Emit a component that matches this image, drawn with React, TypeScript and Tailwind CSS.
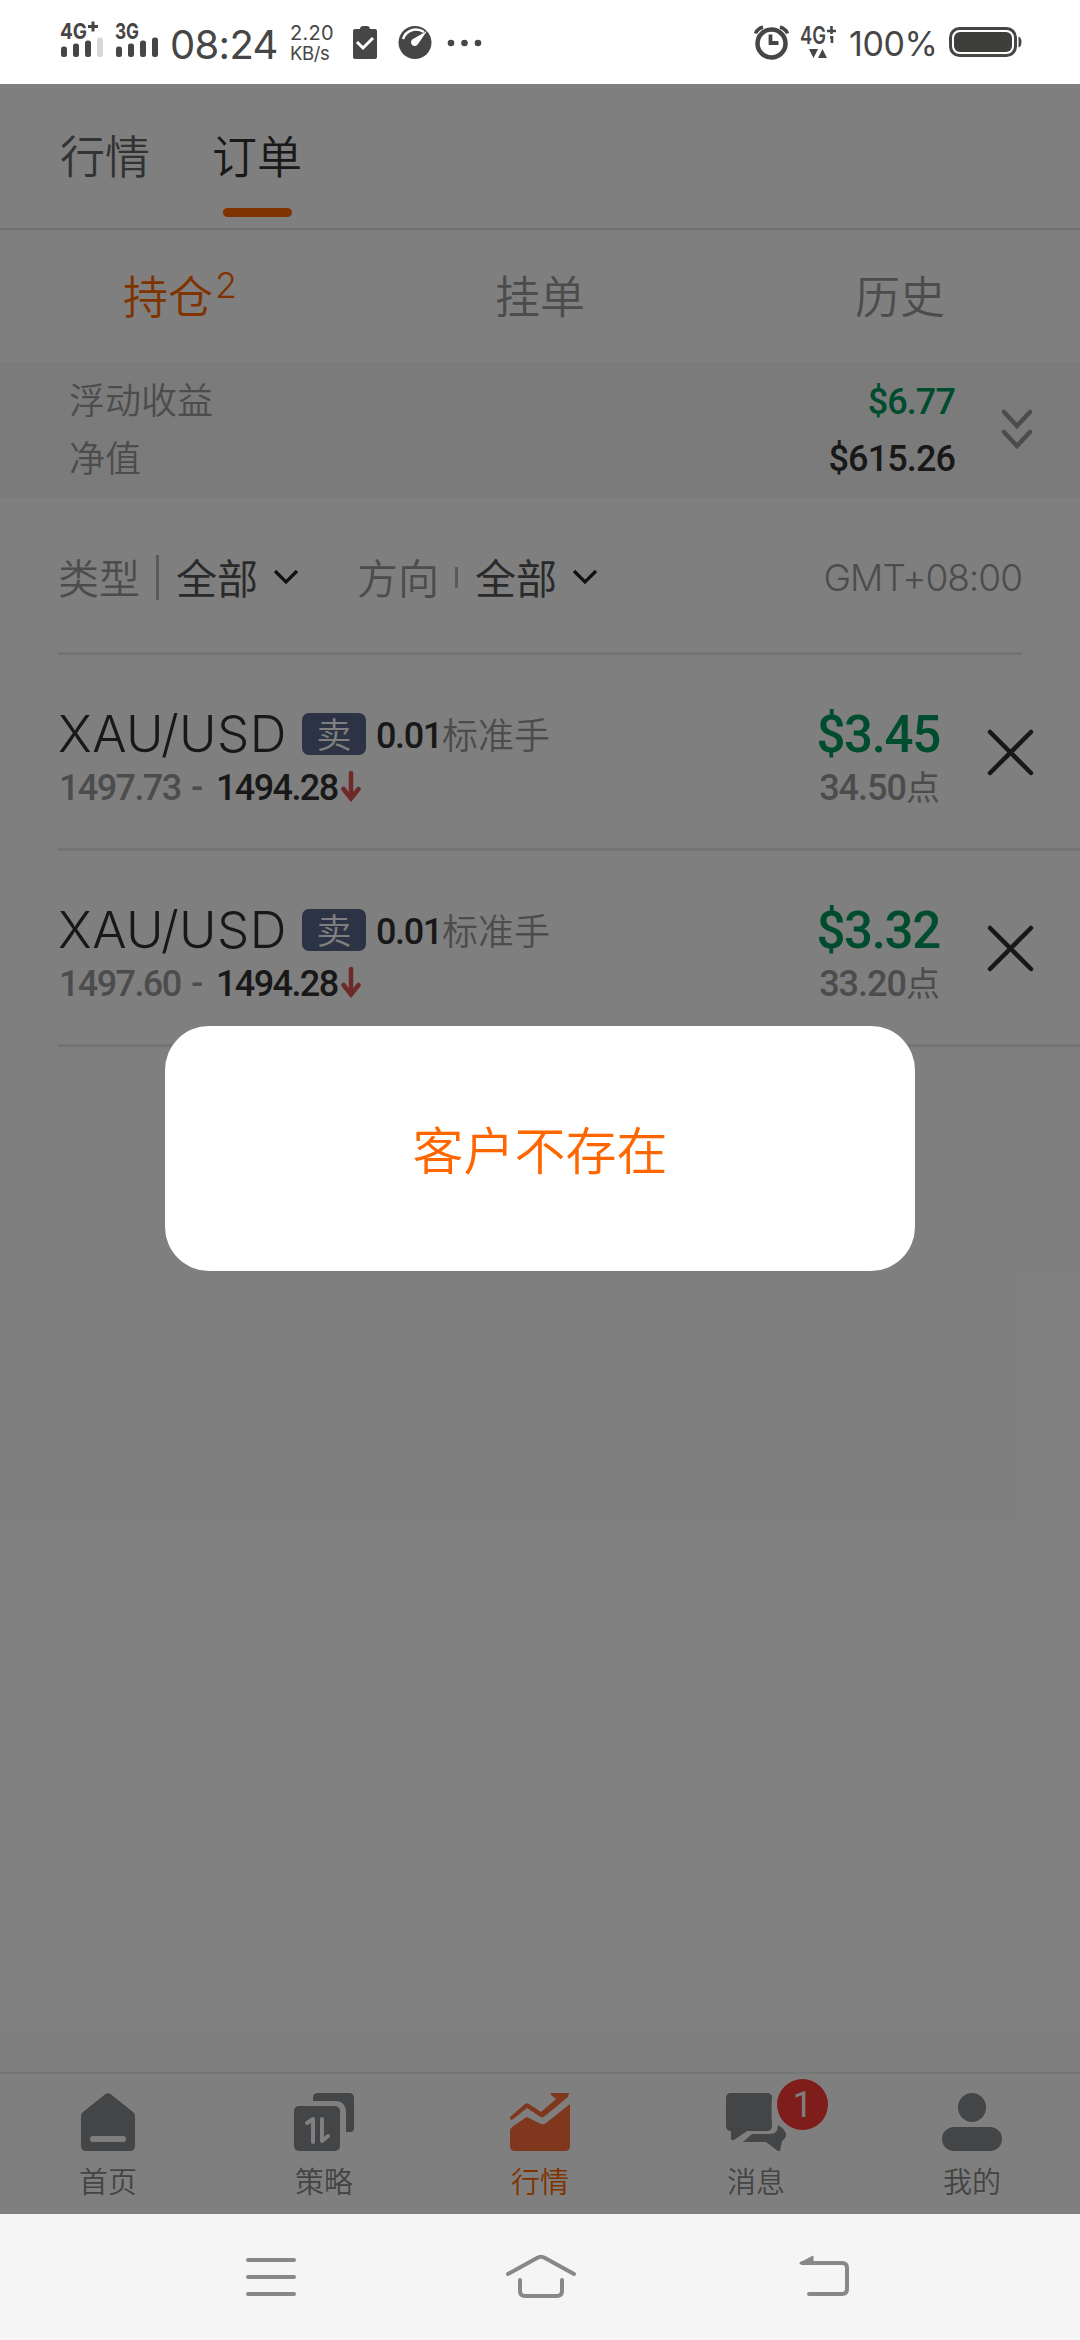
import { ReactNode } from 'react';
import clsx from 'clsx';

interface Order {
  id: number;
  symbol: string;
  lots: string;
  openPrice: string;
  currentPrice: string;
  profit: string;
  points: string;
}

const orders: Order[] = [
  { id: 1, symbol: 'XAU/USD', lots: '0.01', openPrice: '1497.73', currentPrice: '1494.28', profit: '$3.45', points: '34.50' },
  { id: 2, symbol: 'XAU/USD', lots: '0.01', openPrice: '1497.60', currentPrice: '1494.28', profit: '$3.32', points: '33.20' },
];

function Signal({ label, plus, level }: { label: string; plus?: boolean; level: number }) {
  return (
    <svg width="46" height="48" viewBox="0 -8 46 48" fill="#464646">
      <text x="0" y="18" fontSize="22" fontWeight="700" textLength={plus ? 27 : 24} lengthAdjust="spacingAndGlyphs">{label}</text>
      {plus && <path d="M28 5.500h10M33 .500v10" stroke="#464646" strokeWidth="3" />}
      {[0, 1, 2, 3].map((i) => (
        <rect key={i} x={1 + i * 12} y={25.5 - i * 3} width="6" height={10.5 + i * 3} rx="2.500" fill={i < level ? '#464646' : '#d8d8d8'} />
      ))}
    </svg>
  );
}

function StatusBar() {
  return (
    <div className="flex h-[84px] items-start bg-white pl-[60px] pr-[58px] font-['Inter',sans-serif] text-[#464646]">
      <div className="mt-[13px] flex w-[110px] gap-[9px]">
        <Signal label="4G" plus level={3} />
        <Signal label="3G" level={4} />
      </div>
      <span className="mt-[25px] w-[120px] text-[40px] leading-[40px] tracking-[-0.7px]">08:24</span>
      <div className="mt-[22px] flex w-[63px] flex-col whitespace-nowrap text-[20px]">
        <span className="leading-[23px] tracking-[0.3px]">2.20</span>
        <span className="text-[18.5px] leading-[17px] tracking-[-0.4px]">KB/s</span>
      </div>
      <svg className="mt-[25px]" width="24" height="35" viewBox="0 0 24 35">
        <path d="M2 4h5c0-2 1.500-3 3-3h4c1.500 0 3 1 3 3h5q2 0 2 2v26q0 2-2 2H2q-2 0-2-2V6q0-2 2-2z" fill="#464646" />
        <path d="M4 17l6 6L20 13" fill="none" stroke="#fff" strokeWidth="3" />
      </svg>
      <svg className="ml-[21px] mt-[25px]" width="34" height="35" viewBox="0 0 34 35">
        <circle cx="17" cy="17.500" r="16.500" fill="#464646" />
        <path d="M5 14C8 5 18 2 26 7" fill="none" stroke="#fff" strokeWidth="2.500" />
        <path d="M29 6L20 19a3.700 3.700 0 1 1-5-5z" fill="#fff" />
      </svg>
      <svg className="ml-[15px] mt-[39px]" width="36" height="8" viewBox="0 0 36 8" fill="#464646">
        <circle cx="4" cy="4" r="3.300" />
        <circle cx="17.500" cy="4" r="3.300" />
        <circle cx="31" cy="4" r="3.300" />
      </svg>
      <div className="ml-auto flex items-start">
        <svg className="mt-[25px]" width="35" height="35" viewBox="0 0 35 35" fill="none" stroke="#464646">
          <circle cx="17.500" cy="18.500" r="14" strokeWidth="4.500" />
          <path d="M16.500 9.500v8.500h8" strokeWidth="3.800" />
          <path d="M1.500 8.500Q3 4 9 2M33.500 8.500Q32 4 26 2" strokeWidth="3.500" />
        </svg>
        <svg className="ml-[10px] mt-[15px]" width="40" height="45" viewBox="0 -10 40 45" fill="#464646">
          <text x="1" y="18.500" fontSize="24" fontWeight="600" textLength="26" lengthAdjust="spacingAndGlyphs">4G</text>
          <path d="M28 6h9M32.500 1v8M33 11v7M31 12.500h2" stroke="#464646" strokeWidth="2.600" />
          <path d="M10 24h9l-4.500 9zM19 33h9l-4.500-9z" />
        </svg>
        <span className="ml-[10px] mt-[25px] w-[100px] text-[34px] leading-[38px] tracking-[-0.4px]">100%</span>
        <svg className="mt-[26px]" width="73" height="32" viewBox="0 0 73 32">
          <rect x="1.500" y="2.500" width="65" height="27" rx="9" fill="none" stroke="#464646" strokeWidth="3" />
          <rect x="5" y="6" width="58" height="20" rx="6" fill="#3e3f3b" />
          <path d="M69.500 10.500q3 1 3 5.500t-3 5.500z" fill="#464646" />
        </svg>
      </div>
    </div>
  );
}

function Summary() {
  return (
    <div className="flex h-[136px] items-center bg-[#f6f6f6] pl-[69px] pr-[47px]">
      <div className="flex flex-col pb-[6px] text-[36px] font-[350] leading-[58px] text-[#999]">
        <span>浮动收益</span>
        <span>净值</span>
      </div>
      <div className="ml-auto flex flex-col pt-px text-right font-['Roboto',sans-serif] text-[36px] font-medium leading-[57px] tracking-[-0.9px]">
        <span className="text-[#00995c]">$6.77</span>
        <span className="text-[#303030]">$615.26</span>
      </div>
      <svg className="ml-[46px]" width="32" height="42" viewBox="0 0 32 42" fill="none" stroke="#999" strokeWidth="4.500" strokeLinecap="round">
        <path d="M3 3l13 14L29 3M3 23l13 14 13-14" />
      </svg>
    </div>
  );
}

function Filter({ label, divider }: { label: string; divider: string }) {
  return (
    <div className="flex items-center">
      <span className="-mt-[2px] font-[350] text-[#999]">{label}</span>
      <span className={clsx('ml-[16px] mr-[17px] w-[3px] bg-[#b4b4b4]', divider)} />
      <span className="-mt-[2px] font-normal text-[#555]">全部</span>
      <svg className="ml-[15px]" width="26" height="17" viewBox="0 0 26 17" fill="none" stroke="#222" strokeWidth="3.200">
        <path d="M2 2l11 11L24 2" />
      </svg>
    </div>
  );
}

function OrderRow({ order }: { order: Order }) {
  return (
    <div className="ml-[58px] flex h-[196px] border-b-[3px] border-[#e6e6e6] pr-[45px]">
      <div className="pt-[51px]">
        <div className="flex h-[56px] items-center">
          <span className="w-[244px] whitespace-nowrap font-['Inter',sans-serif] text-[51px] font-light leading-[56px] tracking-[0.4px] text-[#303030]">{order.symbol}</span>
          <span className="flex h-[42px] w-[64px] items-center justify-center rounded-[7px] bg-[#576788] pb-[3px] text-[35px] font-[350] leading-[39px] text-white">卖</span>
          <span className="ml-[10px] w-[66px] pt-[3px] font-['Roboto',sans-serif] text-[36px] font-medium leading-[42px] tracking-[-1.4px] text-[#303030]">{order.lots}</span>
          <span className="-mt-[3px] text-[36px] font-[350] leading-[42px] text-[#999]">标准手</span>
        </div>
        <div className="mt-[2px] flex h-[48px] items-center whitespace-pre pl-px font-['Roboto',sans-serif] text-[36px] font-medium leading-[48px] tracking-[-1.6px]">
          <span className="w-[132px] text-[#999]">{order.openPrice}</span>
          <span className="w-[25px] text-[#999]">-</span>
          <span className="text-[#303030]">{order.currentPrice}</span>
          <svg className="-mt-[4px] ml-[3px]" width="20" height="32" viewBox="0 0 20 32" fill="none" stroke="#dc5252" strokeWidth="4.500" strokeLinecap="round">
            <path d="M10 3v25M2.500 19L10 28.500 17.500 19" />
          </svg>
        </div>
      </div>
      <div className="ml-auto flex flex-col items-end pt-[51px]">
        <span className="font-['Roboto',sans-serif] text-[51px] font-medium leading-[58px] tracking-[-1.3px] text-[#00995c]">{order.profit}</span>
        <div className="flex h-[48px] items-center text-[#999]">
          <span className="font-['Roboto',sans-serif] text-[36px] font-medium leading-[48px] tracking-[-1px]">{order.points}</span>
          <span className="-mt-[4px] text-[34px] font-normal leading-[44px]">点</span>
        </div>
      </div>
      <svg className="ml-[46px] mt-[73px]" width="49" height="49" viewBox="0 0 49 49" fill="none" stroke="#303030" strokeWidth="4.500" strokeLinecap="round">
        <path d="M4 4l41 41M45 4L4 45" />
      </svg>
    </div>
  );
}

function TabItem({ label, active, badge, children }: { label: string; active?: boolean; badge?: string; children: ReactNode }) {
  return (
    <div className={clsx('relative flex flex-1 flex-col items-center pt-[18px]', active ? 'text-[#ff6600]' : 'text-[#888]')}>
      <svg width="62" height="60" viewBox="0 0 62 60" fill={active ? '#ff6f3c' : '#888a8c'}>
        {children}
      </svg>
      <span className="mt-[10px] text-[29px] font-[350] leading-[36px]">{label}</span>
      {badge && (
        <span className="absolute left-[129px] top-[5px] flex h-[51px] w-[51px] items-center justify-center rounded-full bg-[#ff3a36] font-['Roboto',sans-serif] text-[36px] text-white">
          {badge}
        </span>
      )}
    </div>
  );
}

function TabBar() {
  return (
    <div className="flex h-[142px] border-t-2 border-[#eaeaec]">
      <TabItem label="首页">
        <path d="M28.500 2q2.500-1.500 5 0L56 20q2 1.500 2 4v30q0 5-5 5H9q-5 0-5-5V24q0-2.500 2-4z" />
        <rect x="13" y="44" width="36" height="6" rx="3" fill="#fff" />
      </TabItem>
      <TabItem label="策略">
        <rect x="1" y="14" width="46" height="45" rx="5" />
        <path d="M20 6q0-5 5-5h31q5 0 5 5v30q0 4-4 4h-4V21q0-12-11-12H20z" />
        <path d="M14 31l6-4v23M29 27v22l6-5" fill="none" stroke="#fff" strokeWidth="4" strokeLinecap="round" strokeLinejoin="round" />
      </TabItem>
      <TabItem label="行情" active>
        <path d="M1 25L16 12q2-1.500 4 0l12 8 15-13-5-4q-1-2 1-2h17l-1 4-23 19q-3 2.500-6 0l-12-8L3 28q-2 0-2-3z" />
        <path d="M1 39q0-2 2-4l13-9q2-1.500 4 0l12 6q3 1 5-1l24-19v42q0 5-5 5H6q-5 0-5-5z" />
      </TabItem>
      <TabItem label="消息" badge="1">
        <path d="M5 1h37q5 0 5 5-1 9 0 28 0 5-5 5H22L9 48H6v-9q-5 0-5-5V6q0-5 5-5z" />
        <path d="M27 42h18q8 0 8-9 8 5 8 10 0 3-4 6l-2 10h-2L41 50H18z" />
      </TabItem>
      <TabItem label="我的">
        <ellipse cx="31" cy="15.500" rx="14" ry="14.500" />
        <rect x="1" y="35" width="60" height="24" rx="12" />
      </TabItem>
    </div>
  );
}

function NavBar() {
  return (
    <div className="flex h-[126px] items-start bg-[#f5f5f5] pl-[245px] pt-[40px]">
      <svg width="52" height="46" viewBox="0 0 52 46" fill="none" stroke="#888" strokeWidth="4" strokeLinecap="round">
        <path d="M3 6h46M3 23h46M3 40h46" />
      </svg>
      <svg className="ml-[208px]" width="72" height="46" viewBox="0 0 72 46" fill="none" stroke="#888" strokeWidth="4" strokeLinecap="round">
        <path d="M3 20L32 4q4-2.500 8 0l29 16M15 26v11q0 5 5 5h32q5 0 5-5V26" />
      </svg>
      <svg className="ml-[221px]" width="54" height="46" viewBox="0 0 54 46" fill="none" stroke="#888" strokeWidth="4" strokeLinecap="round">
        <path d="M4 9h40q5 0 5 5v21q0 5-5 5H11" />
        <path d="M2 9L15 2v8z" fill="#888" strokeWidth="1" />
      </svg>
    </div>
  );
}

export default function App() {
  return (
    <div className="flex h-[2340px] w-[1080px] flex-col overflow-hidden bg-white font-['Noto_Sans_CJK_SC',sans-serif]">
      <StatusBar />

      <div className="relative flex flex-1 flex-col">
        <div className="flex h-[146px] items-start gap-[62px] border-b-2 border-[#dedede] pl-[60px] pt-[38px] text-[45px] font-[350] leading-[66px]">
          <span className="text-[#666]">行情</span>
          <div className="flex flex-col items-center text-[#333]">
            <span>订单</span>
            <span className="mt-[20px] h-[9px] w-[69px] rounded-full bg-[#ff6600]" />
          </div>
        </div>

        <div className="grid h-[132px] grid-cols-3 pt-[32px] text-center text-[45px] font-[350] leading-[66px] text-[#999]">
          <div className="flex justify-center text-[#ff6600]">
            <span>持仓</span>
            <span className="mt-[2px] pl-[2px] font-['Inter',sans-serif] text-[36px] leading-[42px]">2</span>
          </div>
          <span>挂单</span>
          <span>历史</span>
        </div>

        <Summary />

        <div className="mx-[58px] flex h-[157px] items-start border-b-[3px] border-[#e6e6e6] pt-[50px] text-[41px] leading-[60px]">
          <Filter label="类型" divider="h-[45px]" />
          <div className="w-[58px]" />
          <Filter label="方向" divider="h-[21px]" />
          <span className="ml-auto font-['Inter',sans-serif] text-[37px] font-light tracking-[-1px] text-[#999]">GMT+08:00</span>
        </div>

        <div className="flex-1">
          {orders.map((order) => (
            <OrderRow key={order.id} order={order} />
          ))}
        </div>

        <TabBar />

        {/* dimmed backdrop with the alert */}
        <div className="absolute inset-0 bg-black/50">
          <div className="mx-auto mt-[942px] flex h-[245px] w-[750px] items-center justify-center rounded-[44px] bg-white text-[51px] font-[350] text-[#ff6600]">
            客户不存在
          </div>
        </div>
      </div>

      <NavBar />
    </div>
  );
}
